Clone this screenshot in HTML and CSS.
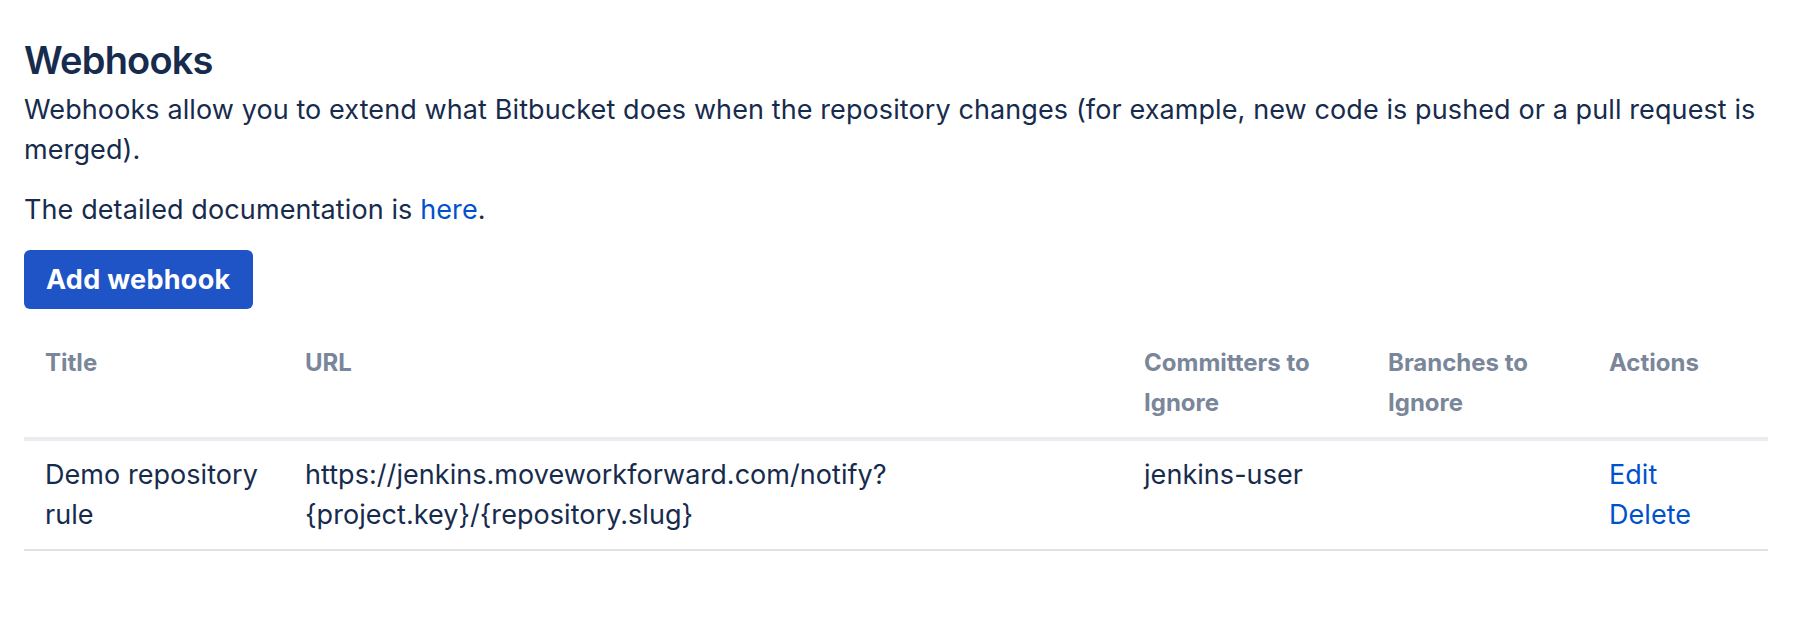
FILE: index.html
```html
<!DOCTYPE html>
<html lang="en">
<head>
<meta charset="utf-8">
<title>Webhooks</title>
<link rel="stylesheet" href="styles.css">
</head>
<body>
<main class="page">
  <h2 class="page-title">Webhooks</h2>
  <p class="desc">Webhooks allow you to extend what Bitbucket does when the repository changes (for example, new code is pushed or a pull request is merged).</p>
  <p class="desc">The detailed documentation is <a class="link" href="#">here</a>.</p>
  <button class="btn-primary" type="button">Add webhook</button>
  <table class="hooks">
    <colgroup>
      <col class="c-title">
      <col class="c-url">
      <col class="c-committers">
      <col class="c-branches">
      <col class="c-actions">
    </colgroup>
    <thead>
      <tr>
        <th>Title</th>
        <th>URL</th>
        <th>Committers to Ignore</th>
        <th>Branches to Ignore</th>
        <th>Actions</th>
      </tr>
    </thead>
    <tbody>
      <tr>
        <td>Demo repository rule</td>
        <td>https://jenkins.moveworkforward.com/notify?<br>{project.key}/{repository.slug}</td>
        <td>jenkins-user</td>
        <td></td>
        <td><a class="link action" href="#">Edit</a><a class="link action" href="#">Delete</a></td>
      </tr>
    </tbody>
  </table>
</main>
</body>
</html>
```

FILE: styles.css
```css
html, body {
  margin: 0;
  padding: 0;
  background: #ffffff;
}

body {
  font-family: "Inter", "Noto Sans", "Liberation Sans", sans-serif;
  color: #172B4D;
  font-size: 27px;
  line-height: 40px;
}

.page {
  padding: 36px 26px 0 24px;
  display: flex;
  flex-direction: column;
  align-items: flex-start;
}

.page-title {
  margin: 0;
  font-size: 38px;
  line-height: 48px;
  font-weight: 600;
  letter-spacing: -0.8px;
  color: #172B4D;
}

.desc {
  margin: 6px 0 0;
  letter-spacing: 0.1px;
}

.desc + .desc {
  margin-top: 20px;
}

.link {
  color: #0052CC;
  text-decoration: none;
}

.btn-primary {
  margin-top: 20px;
  font-family: inherit;
  font-size: 27px;
  font-weight: 700;
  line-height: 39px;
  letter-spacing: 0.3px;
  color: #ffffff;
  background: #1E54C6;
  border: 0;
  border-radius: 6px;
  padding: 10px 22px;
  cursor: pointer;
}

.hooks {
  margin-top: 20px;
  width: 1744px;
  table-layout: fixed;
  border-collapse: collapse;
}

.c-title { width: 260px; }
.c-url { width: 839px; }
.c-committers { width: 244px; }
.c-branches { width: 221px; }
.c-actions { width: 180px; }

.hooks th,
.hooks td {
  text-align: left;
  vertical-align: top;
  padding: 14px 21px;
}

.hooks th {
  font-size: 24px;
  line-height: 40px;
  font-weight: 700;
  color: #7A869A;
  border-bottom: 4px solid #EBECF0;
}

.hooks td {
  font-size: 27px;
  line-height: 40px;
  letter-spacing: 0.05px;
  border-bottom: 2px solid #DFE1E6;
}

.action {
  display: block;
}
```
